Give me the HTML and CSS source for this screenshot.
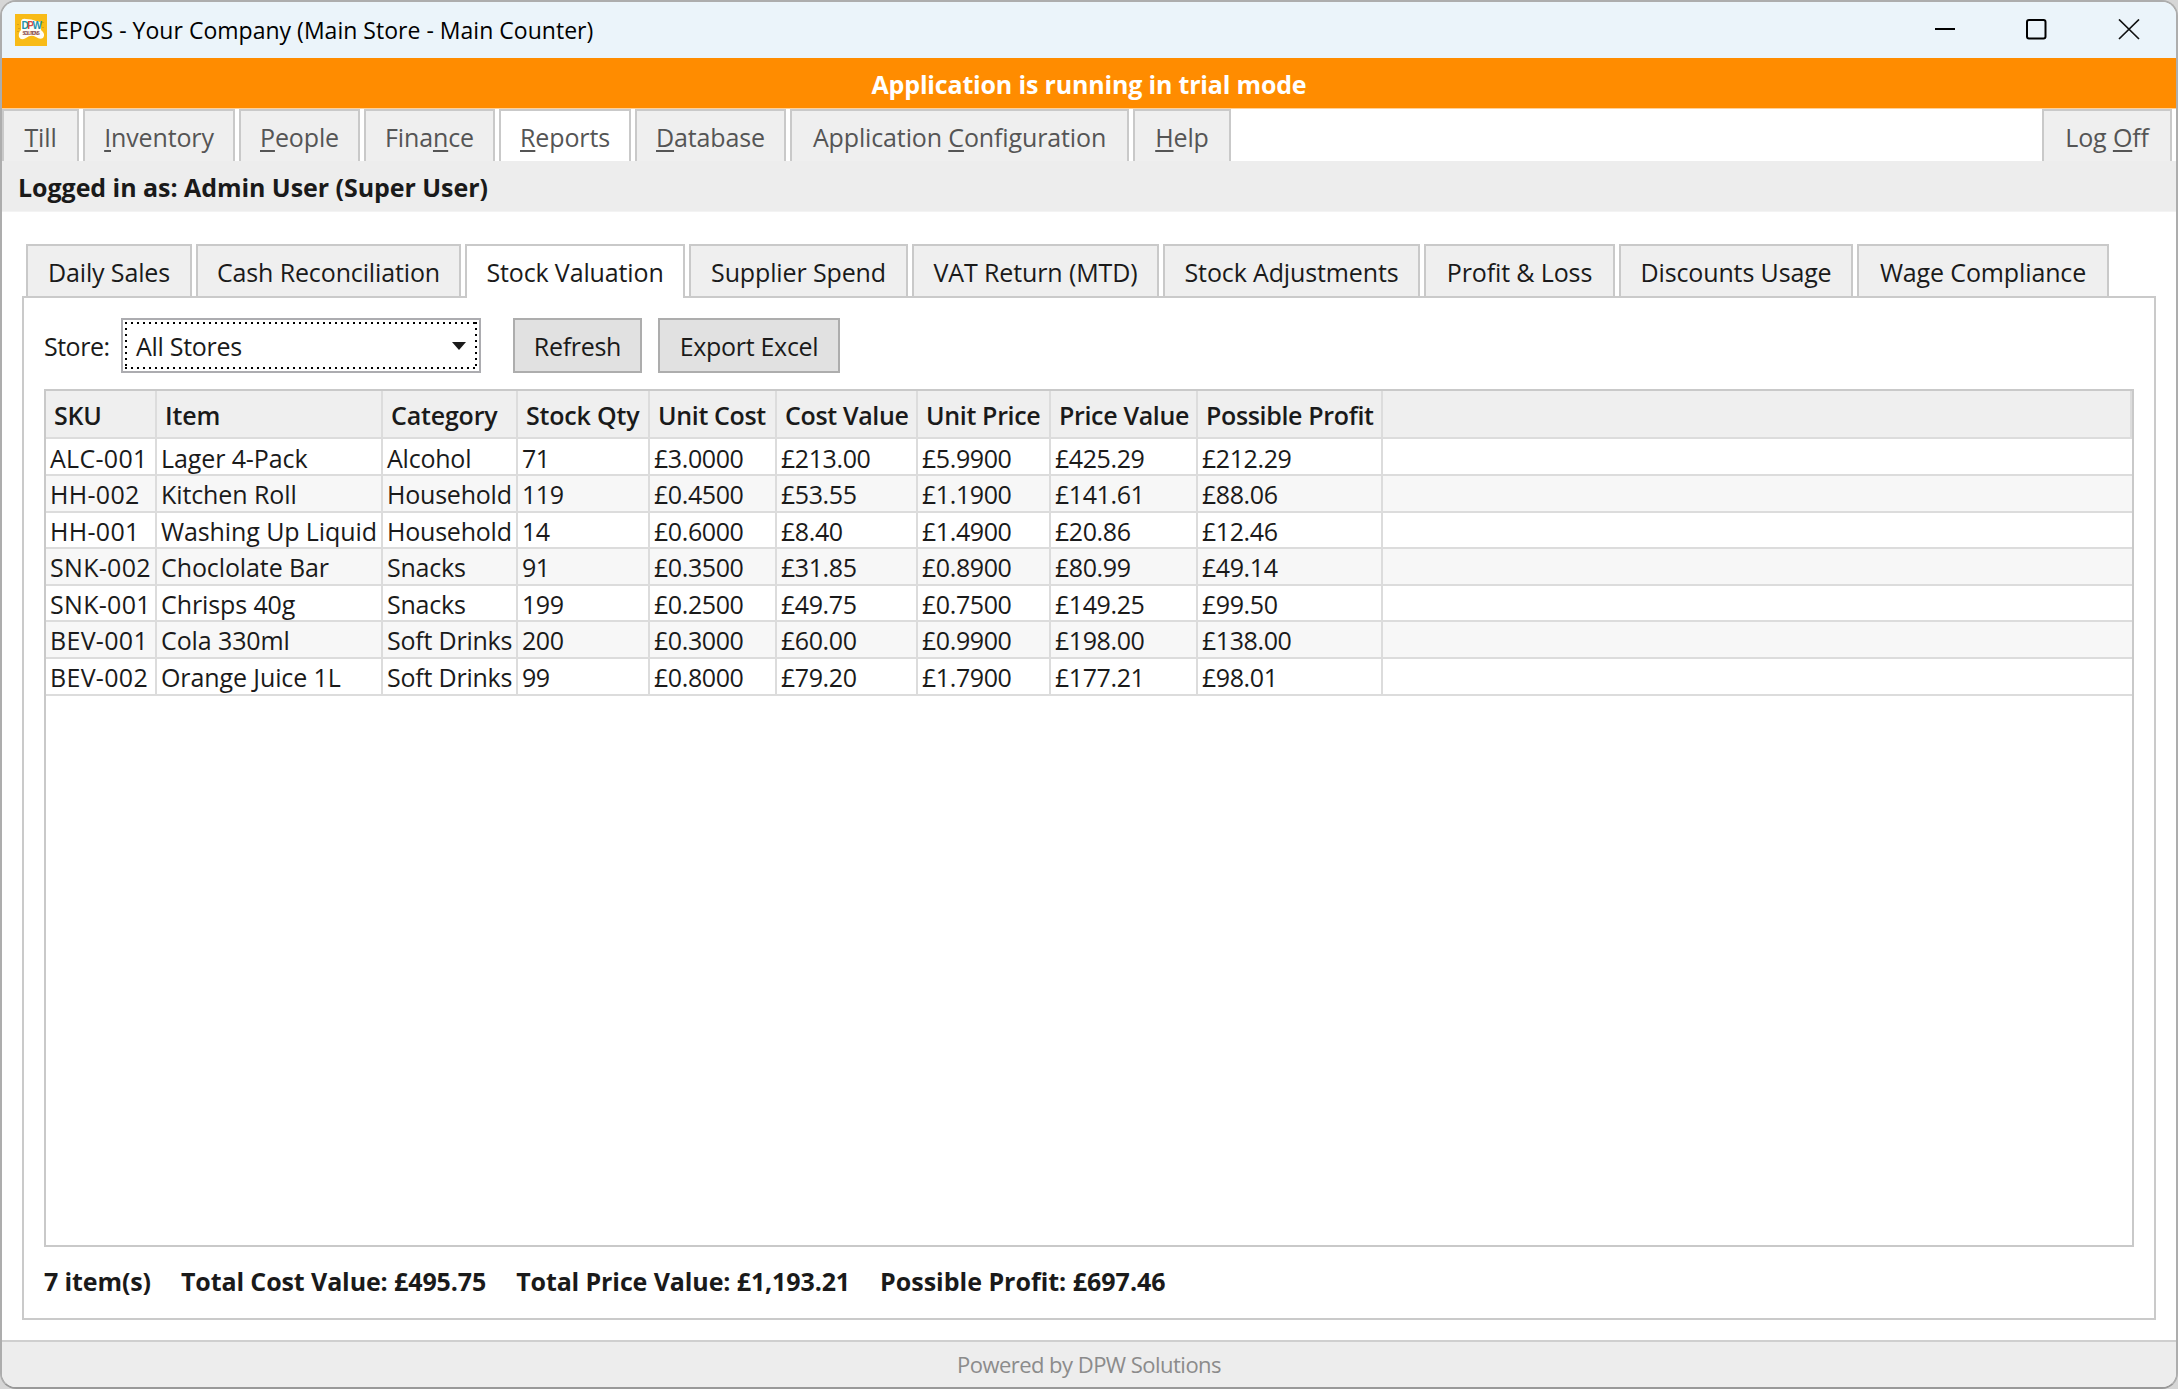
FILE: index.html
```html
<!DOCTYPE html>
<html lang="en">

<head>
    <meta charset="UTF-8">
    <meta name="viewport" content="width=device-width, initial-scale=1.0">
    <title>EPOS - Your Company (Main Store - Main Counter)</title>
    <link rel="stylesheet" href="styles.css">
</head>

<body>
    <div class="window">
        <header class="title-bar">
            <svg class="app-icon" width="32" height="32" viewBox="0 0 32 32">
                <rect width="32" height="32" fill="#f8bb17" />
                <path d="M6 7Q7 4 11 5Q17 5 21 7Q26 7 26 11V16Q31 20 28 24Q25 26 21 23Q16 20 11 24Q6 27 4 23Q3 19 6 16Z" fill="#fffdf5" />
                <path d="M3 10v1M4 14v1M28 8v1M28 13v1M3 17v1" stroke="#b98a1a" stroke-width="1" />
                <text x="6.5" y="15" class="logo-main"><tspan fill="#1d93ad">D</tspan><tspan fill="#d84a3c">P</tspan><tspan fill="#1d93ad">W</tspan></text>
                <text x="7.5" y="20.5" class="logo-sub" textLength="17">SOLUTIONS</text>
            </svg>
            <span class="title">EPOS - Your Company (Main Store - Main Counter)</span>
            <div class="window-buttons">
                <svg width="22" height="22" viewBox="0 0 22 22"><path d="M1 10H21" stroke="#000" stroke-width="2" /></svg>
                <svg width="22" height="22" viewBox="0 0 22 22"><rect x="1" y="1" width="18.5" height="18.5" rx="2" fill="none" stroke="#000" stroke-width="2" /></svg>
                <svg width="22" height="22" viewBox="0 0 22 22"><path d="M1 0.5L21 20M21 0.5L1 20" stroke="#111" stroke-width="1.7" /></svg>
            </div>
        </header>

        <div class="trial-banner">Application is running in trial mode</div>

        <nav class="main-tabs">
            <div class="tab"><span><u>T</u>ill</span></div>
            <div class="tab"><span><u>I</u>nventory</span></div>
            <div class="tab"><span><u>P</u>eople</span></div>
            <div class="tab"><span>Fina<u>n</u>ce</span></div>
            <div class="tab active"><span><u>R</u>eports</span></div>
            <div class="tab"><span><u>D</u>atabase</span></div>
            <div class="tab"><span>Application <u>C</u>onfiguration</span></div>
            <div class="tab"><span><u>H</u>elp</span></div>
            <div class="tab log-off"><span>Log <u>O</u>ff</span></div>
        </nav>

        <div class="user-bar">Logged in as: Admin User (Super User)</div>

        <main class="content">
            <nav class="report-tabs">
                <div class="tab">Daily Sales</div>
                <div class="tab">Cash Reconciliation</div>
                <div class="tab active">Stock Valuation</div>
                <div class="tab">Supplier Spend</div>
                <div class="tab">VAT Return (MTD)</div>
                <div class="tab">Stock Adjustments</div>
                <div class="tab">Profit &amp; Loss</div>
                <div class="tab">Discounts Usage</div>
                <div class="tab">Wage Compliance</div>
            </nav>

            <section class="panel">
                <div class="toolbar">
                    <span class="store-label">Store:</span>
                    <div class="combo">
                        <div class="combo-focus">
                            <span>All Stores</span>
                            <svg width="14" height="8" viewBox="0 0 14 8"><path d="M0 0H14L7 8Z" fill="#1a1a1a" /></svg>
                        </div>
                    </div>
                    <div class="button refresh">Refresh</div>
                    <div class="button export">Export Excel</div>
                </div>

                <div class="grid">
                    <table>
                        <colgroup>
                            <col class="col-sku">
                            <col class="col-item">
                            <col class="col-category">
                            <col class="col-qty">
                            <col class="col-unit-cost">
                            <col class="col-cost-value">
                            <col class="col-unit-price">
                            <col class="col-price-value">
                            <col class="col-profit">
                            <col>
                        </colgroup>
                        <thead>
                            <tr><th>SKU</th><th>Item</th><th>Category</th><th>Stock Qty</th><th>Unit Cost</th><th>Cost Value</th><th>Unit Price</th><th>Price Value</th><th>Possible Profit</th><th></th></tr>
                        </thead>
                        <tbody>
                            <tr><td>ALC-001</td><td>Lager 4-Pack</td><td>Alcohol</td><td>71</td><td>£3.0000</td><td>£213.00</td><td>£5.9900</td><td>£425.29</td><td>£212.29</td><td></td></tr>
                            <tr><td>HH-002</td><td>Kitchen Roll</td><td>Household</td><td>119</td><td>£0.4500</td><td>£53.55</td><td>£1.1900</td><td>£141.61</td><td>£88.06</td><td></td></tr>
                            <tr class="short"><td>HH-001</td><td>Washing Up Liquid</td><td>Household</td><td>14</td><td>£0.6000</td><td>£8.40</td><td>£1.4900</td><td>£20.86</td><td>£12.46</td><td></td></tr>
                            <tr><td>SNK-002</td><td>Choclolate Bar</td><td>Snacks</td><td>91</td><td>£0.3500</td><td>£31.85</td><td>£0.8900</td><td>£80.99</td><td>£49.14</td><td></td></tr>
                            <tr class="short"><td>SNK-001</td><td>Chrisps 40g</td><td>Snacks</td><td>199</td><td>£0.2500</td><td>£49.75</td><td>£0.7500</td><td>£149.25</td><td>£99.50</td><td></td></tr>
                            <tr><td>BEV-001</td><td>Cola 330ml</td><td>Soft Drinks</td><td>200</td><td>£0.3000</td><td>£60.00</td><td>£0.9900</td><td>£198.00</td><td>£138.00</td><td></td></tr>
                            <tr><td>BEV-002</td><td>Orange Juice 1L</td><td>Soft Drinks</td><td>99</td><td>£0.8000</td><td>£79.20</td><td>£1.7900</td><td>£177.21</td><td>£98.01</td><td></td></tr>
                        </tbody>
                    </table>
                </div>

                <div class="totals">
                    <span>7 item(s)</span>
                    <span>Total Cost Value: £495.75</span>
                    <span>Total Price Value: £1,193.21</span>
                    <span class="profit">Possible Profit: £697.46</span>
                </div>
            </section>
        </main>

        <footer class="status-bar">Powered by DPW Solutions</footer>
    </div>
</body>

</html>
```

FILE: styles.css
```css
* {
    box-sizing: border-box;
}

body {
    margin: 0;
    background-color: #d6d6d6;
    font-family: "Open Sans", "Noto Sans", sans-serif;
    font-size: 25px;
    line-height: 34px;
    letter-spacing: -0.13px;
    color: #1a1a1a;
}

.window {
    display: flex;
    flex-direction: column;
    height: 1389px;
    border: 2px solid #adadad;
    border-bottom-color: #999;
    border-radius: 16px;
    background-color: #fff;
    overflow: hidden;
    white-space: nowrap;
}

.title-bar {
    display: flex;
    align-items: center;
    height: 56px;
    padding-left: 13px;
    background-color: #ebf4fa;
}

.title {
    margin-left: 9px;
    font-size: 23px;
    letter-spacing: 0.02px;
    color: #000;
}

.logo-main {
    font: bold 10px "Liberation Sans", sans-serif;
    letter-spacing: -1.5px;
}

.logo-sub {
    font: bold 4.5px "Liberation Sans", sans-serif;
    fill: #8a4a4a;
}

.window-buttons {
    display: flex;
    gap: 70px;
    margin-left: auto;
    padding-right: 36px;
}

.trial-banner {
    height: 51px;
    padding-top: 9px;
    border-bottom: 1px solid #ffd199;
    background-color: #ff8c00;
    color: #fff;
    font-weight: bold;
    letter-spacing: -0.17px;
    text-align: center;
}

.tab {
    display: flex;
    justify-content: center;
    padding-top: 9px;
    border: 2px solid #c9c9c9;
    border-bottom: none;
    background-color: #efefef;
}

.tab.active {
    background-color: #fff;
}

/* top level tabs */
.main-tabs {
    display: grid;
    grid-template-columns: 77px 152px 121px 131px 132px 151px 339px 98px 1fr;
    gap: 4px;
    height: 52px;
    padding-right: 4px;
    color: #555;
}

.main-tabs u {
    text-decoration-thickness: 2px;
    text-underline-offset: 3px;
    text-decoration-skip-ink: none;
}

.log-off {
    justify-self: end;
    width: 130px;
}

.user-bar {
    height: 51px;
    padding: 9px 0 0 16px;
    background-color: #ededed;
    border-bottom: 1px solid #f3f3f3;
    font-weight: bold;
    letter-spacing: -0.05px;
}

.content {
    display: flex;
    flex-direction: column;
    flex: 1;
    padding: 32px 20px 20px;
}

.report-tabs {
    display: grid;
    grid-template-columns: 166px 265px 220px 219px 247px 257px 191px 234px 252px;
    gap: 4px;
    height: 52px;
    padding-left: 4px;
}

.report-tabs .active {
    z-index: 1;
    height: 54px;
}

.panel {
    display: flex;
    flex-direction: column;
    flex: 1;
    padding: 20px;
    border: 2px solid #cacaca;
}

.toolbar {
    display: flex;
    height: 55px;
    line-height: 52px;
    letter-spacing: -0.3px;
}

.store-label {
    width: 77px;
    padding-top: 2px;
    letter-spacing: -0.5px;
}

.combo {
    width: 360px;
    margin-right: 32px;
    padding: 2px;
    border: 2px solid #acacb0;
}

/* dotted focus rectangle, 2px on / 4px off */
.combo-focus {
    display: flex;
    justify-content: space-between;
    height: 47px;
    padding: 2px 11px;
    background:
        repeating-linear-gradient(90deg, #000 0 2px, transparent 2px 6px) top / 100% 2px no-repeat,
        repeating-linear-gradient(90deg, #000 0 2px, transparent 2px 6px) bottom / 100% 2px no-repeat,
        repeating-linear-gradient(#000 0 2px, transparent 2px 6px) left / 2px 100% no-repeat,
        repeating-linear-gradient(#000 0 2px, transparent 2px 6px) right / 2px 100% no-repeat;
    line-height: 44px;
}

.combo-focus svg {
    margin-top: 18px;
}

.button {
    border: 2px solid #adadad;
    background-color: #e1e1e1;
    text-align: center;
}

.refresh {
    width: 129px;
    margin-right: 16px;
}

.export {
    width: 182px;
}

.grid {
    flex: 1;
    margin-top: 16px;
    border: 2px solid #c9c9c9;
}

table {
    width: 100%;
    table-layout: fixed;
    border-collapse: separate;
    border-spacing: 0;
}

th,
td {
    padding: 3px 0 0 4px;
    border-right: 2px solid #dcdcdc;
    border-bottom: 2px solid #dcdcdc;
    text-align: left;
    line-height: 31px;
}

th {
    height: 48px;
    padding: 2px 0 0 8px;
    background-color: #efefef;
    font-weight: 600;
    line-height: 32px;
    letter-spacing: -0.18px;
}

th:nth-child(n+5) {
    letter-spacing: -0.34px;
}

td {
    height: 37px;
    vertical-align: top;
    letter-spacing: -0.42px;
}

td:first-child {
    letter-spacing: 0.3px;
}

td:nth-child(2) {
    letter-spacing: -0.1px;
}

td:nth-child(3) {
    letter-spacing: -0.22px;
}

tbody tr:first-child td {
    padding-top: 4px;
}

.short td {
    height: 36px;
}

td:last-child {
    border-right: none;
}

tbody tr:nth-child(even) {
    background-color: #f7f7f7;
}

.col-sku { width: 111px; }
.col-item { width: 226px; }
.col-category { width: 135px; }
.col-qty { width: 132px; }
.col-unit-cost { width: 127px; }
.col-cost-value { width: 141px; }
.col-unit-price { width: 133px; }
.col-price-value { width: 147px; }
.col-profit { width: 185px; }

.totals {
    display: flex;
    gap: 30px;
    height: 51px;
    padding-top: 17px;
    font-weight: bold;
    letter-spacing: -0.11px;
}

.totals .profit {
    letter-spacing: 0;
}

.status-bar {
    height: 47px;
    padding-top: 5px;
    border-top: 2px solid #cfcfcf;
    background-color: #ededed;
    color: #8b8b8b;
    font-size: 22px;
    letter-spacing: -0.53px;
    text-align: center;
}
```
